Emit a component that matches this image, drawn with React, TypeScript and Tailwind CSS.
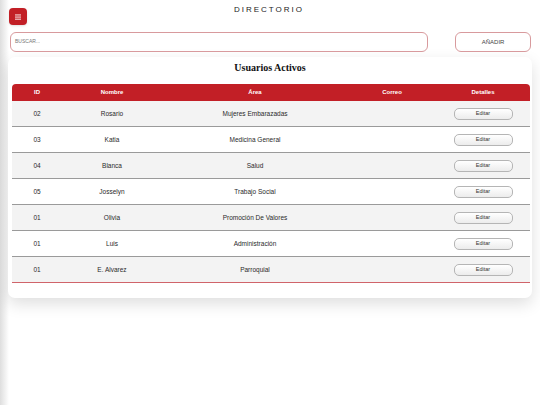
import React from 'react';

const users = [
  { id: '02', nombre: 'Rosario', area: 'Mujeres Embarazadas' },
  { id: '03', nombre: 'Katia', area: 'Medicina General' },
  { id: '04', nombre: 'Blanca', area: 'Salud' },
  { id: '05', nombre: 'Josselyn', area: 'Trabajo Social' },
  { id: '01', nombre: 'Olivia', area: 'Promoción De Valores' },
  { id: '01', nombre: 'Luis', area: 'Administración' },
  { id: '01', nombre: 'E. Alvarez', area: 'Parroquial' },
];

const cols = 'grid grid-cols-[50px_100px_186px_88px_1fr] items-center';

export default function App() {
  return (
    <div className="relative w-[540px] h-[405px] bg-white overflow-hidden font-['Liberation_Sans',Arial,sans-serif] text-[#222]">
      {/* sidebar shadow on the left edge */}
      <div className="absolute left-0 top-0 h-full w-[9px] bg-gradient-to-r from-[#dedede] to-white" />

      <div className="relative px-[9px] pt-[3px]">
        <div className="flex items-start h-[27px]">
          <button className="mt-[5px] w-[18px] h-[17px] rounded-[4px] bg-[#c21f26] flex items-center justify-center shadow-sm">
            <svg width="6" height="6" viewBox="0 0 6 6">
              <rect x="0" y="0.5" width="6" height="0.9" fill="white" />
              <rect x="0" y="2.6" width="6" height="0.9" fill="white" />
              <rect x="0" y="4.7" width="6" height="0.9" fill="white" />
            </svg>
          </button>
          <h1 className="flex-1 text-center text-[8px] tracking-[2px] text-[#222] leading-none mt-[3px] pr-[20px]">DIRECTORIO</h1>
        </div>

        <div className="flex items-center mt-[2px]">
          <div className="ml-[1px] w-[419px] h-[20px] rounded-[6px] border border-[#d89a9d] flex items-center px-[4px]">
            <span className="text-[5px] text-[#777]">BUSCAR...</span>
          </div>
          <button className="ml-[27px] w-[76px] h-[20px] rounded-[6px] border border-[#d89a9d] text-[6px] text-[#444] flex items-center justify-center">
            AÑADIR
          </button>
        </div>

        <div className="mt-[5px] w-[524px] -ml-[1px] bg-white rounded-[7px] shadow-[0_6px_16px_rgba(0,0,0,0.13)] pb-[15px] pt-[5px]">
          <h2 className="text-center font-['Liberation_Serif','Times_New_Roman',serif] font-bold text-[10px] text-[#111] leading-[12px]">
            Usuarios Activos
          </h2>
          <div className="mt-[10px] ml-[4px] w-[518px]">
            <div className={`${cols} h-[17px] bg-[#c21f26] rounded-t-[4px] text-white font-bold text-[6px] text-center`}>
              <span>ID</span>
              <span>Nombre</span>
              <span>Área</span>
              <span>Correo</span>
              <span>Detalles</span>
            </div>
            {users.map((u, i) => (
              <div
                key={i}
                className={`${cols} h-[26px] text-[6.5px] text-center text-[#2a2a2a] border-b ${
                  i === users.length - 1 ? 'border-[#d0646a]' : 'border-[#9a9a9a]'
                } ${i % 2 === 0 ? 'bg-[#f3f3f3]' : 'bg-white'}`}
              >
                <span>{u.id}</span>
                <span>{u.nombre}</span>
                <span>{u.area}</span>
                <span></span>
                <span className="flex justify-center">
                  <button className="w-[59px] h-[12px] rounded-[5px] border border-[#b5b5b5] bg-gradient-to-b from-white to-[#ececec] text-[5.5px] text-[#333] leading-none">
                    Editar
                  </button>
                </span>
              </div>
            ))}
          </div>
        </div>
      </div>
    </div>
  );
}
